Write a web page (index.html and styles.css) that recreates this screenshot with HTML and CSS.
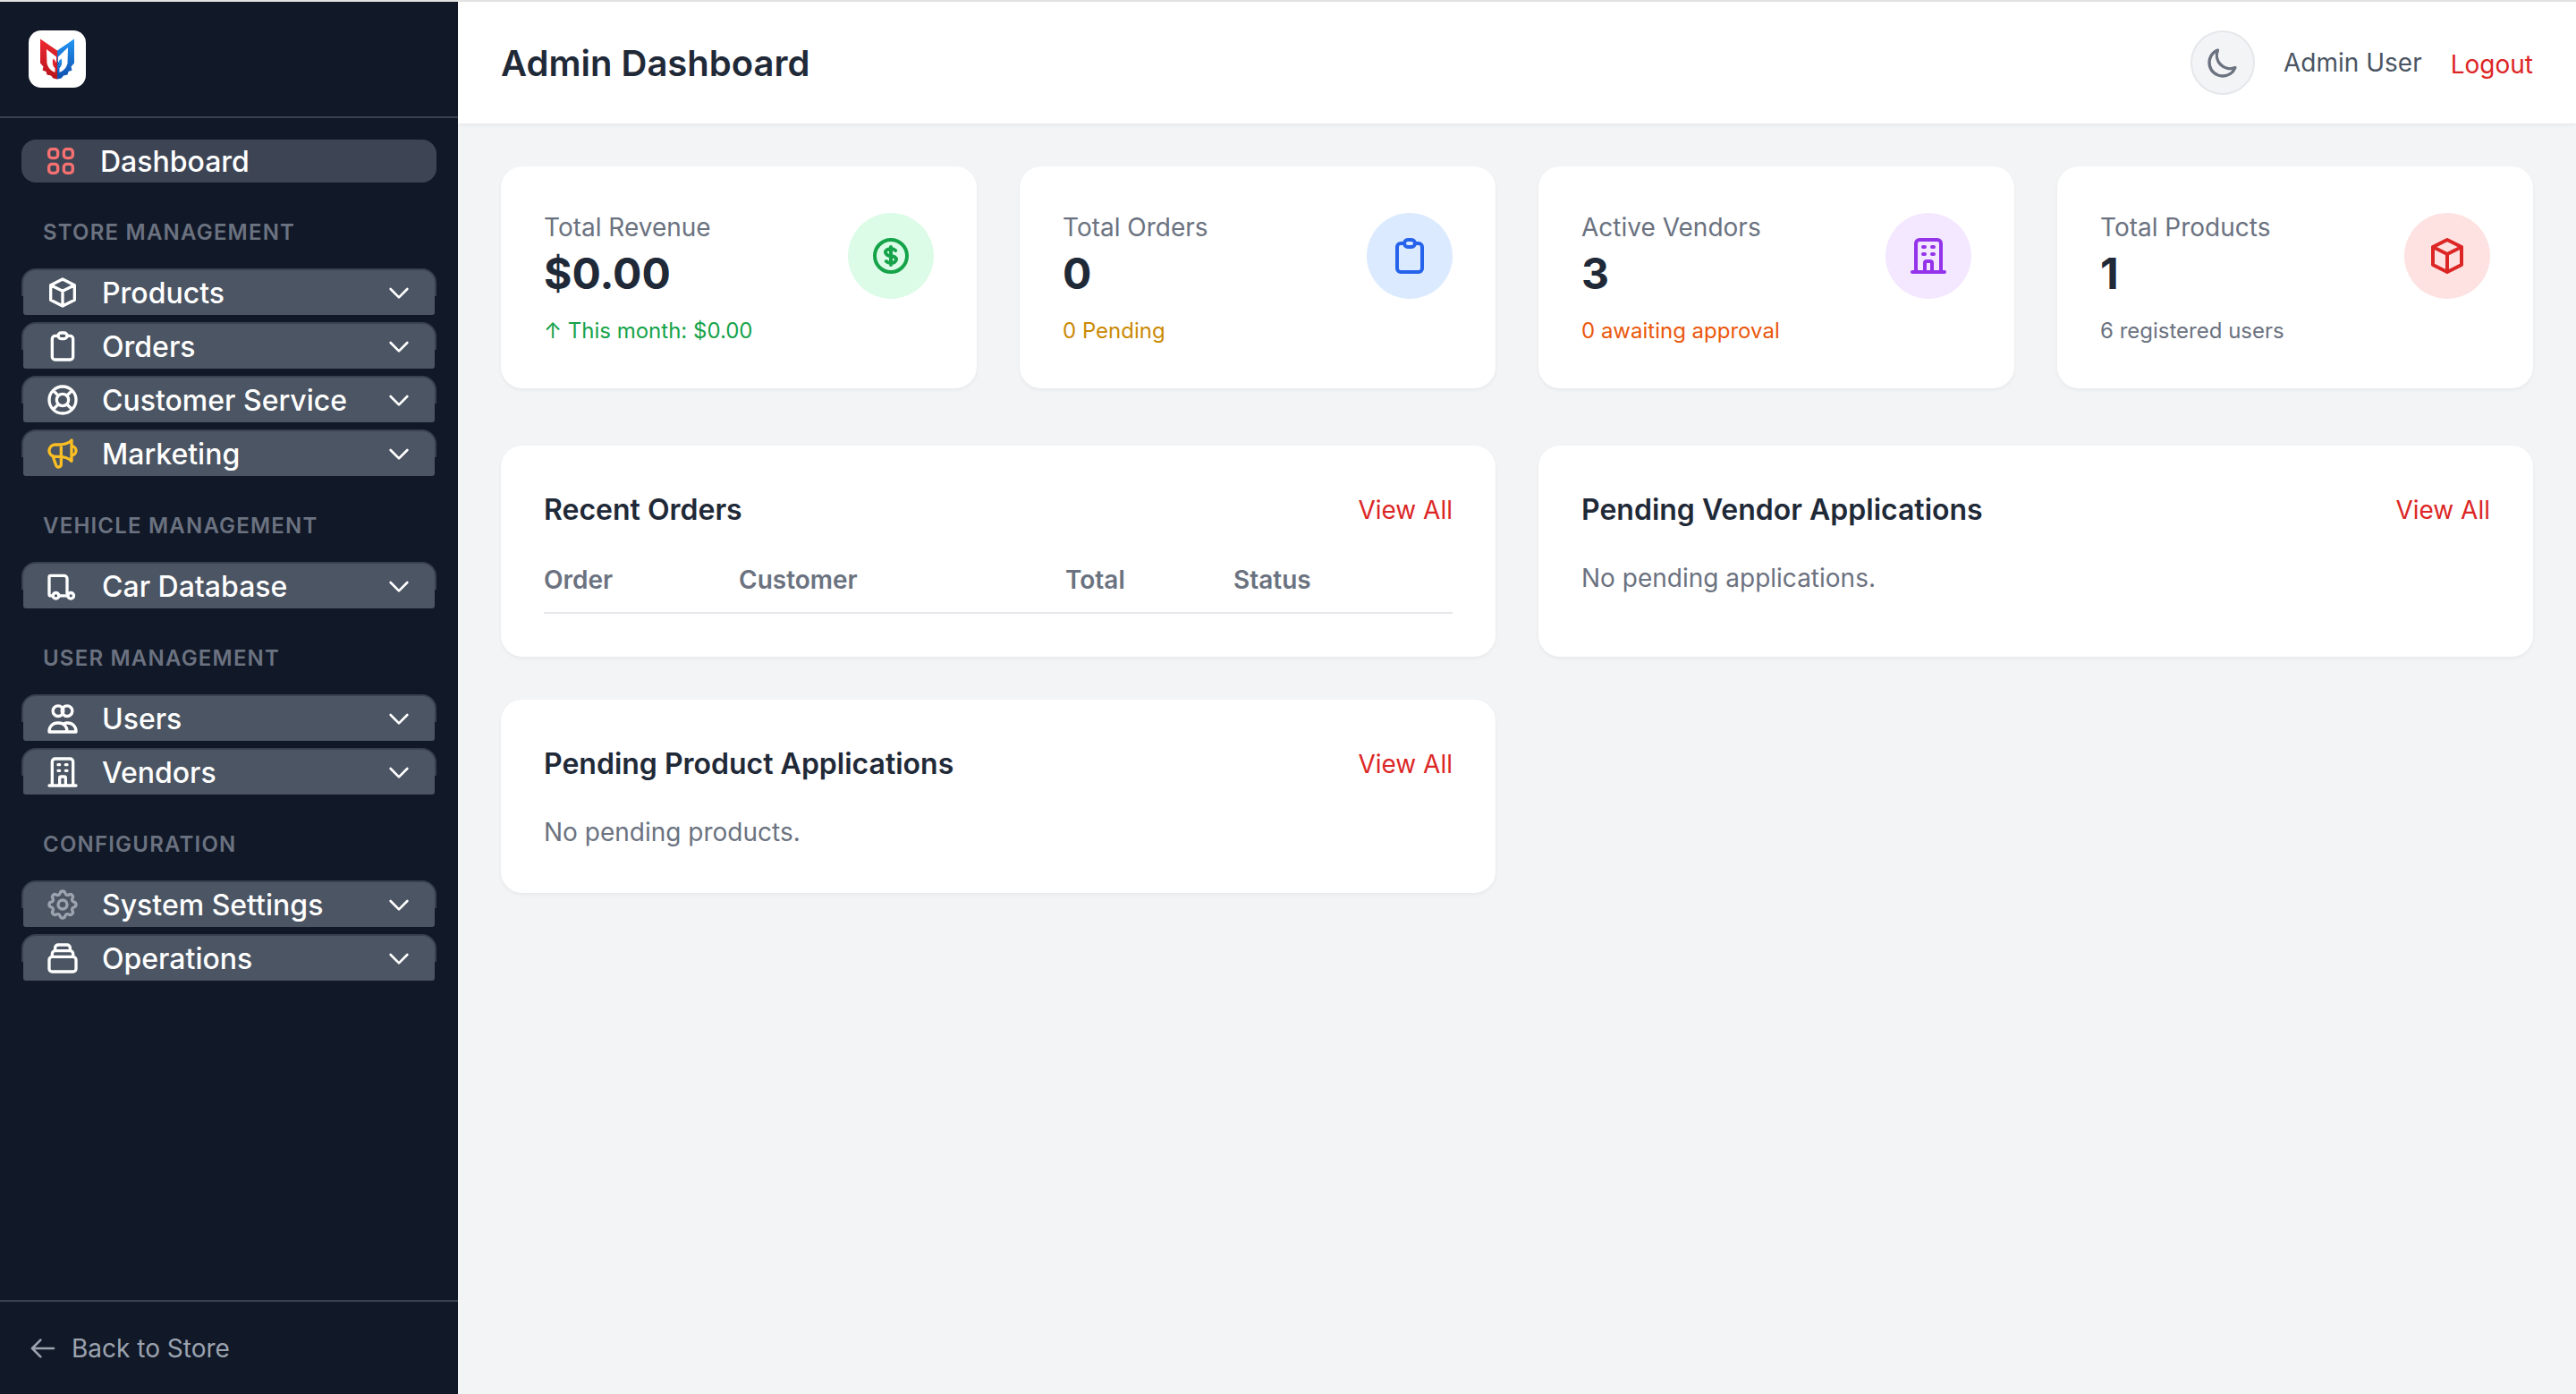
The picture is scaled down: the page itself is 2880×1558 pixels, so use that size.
FILE: index.html
```html
<!DOCTYPE html>
<html lang="en">
<head>
    <meta charset="utf-8">
    <title>Admin Dashboard</title>
    <link rel="stylesheet" href="styles.css">
</head>
<body>
    <div class="top-strip"></div>
    <div class="app">
        <!--Sidebar-->
        <aside class="sidebar">
            <div class="brand">
                <div class="logo">
                    <svg viewBox="0 0 64 64" width="64" height="64">
                        <defs>
                            <linearGradient id="logoRed" x1="0" y1="0" x2="0" y2="1"><stop offset="0" stop-color="#ee2a30"/><stop offset="1" stop-color="#b8141c"/></linearGradient>
                            <linearGradient id="logoBlue" x1="0" y1="0" x2="0" y2="1"><stop offset="0" stop-color="#2196f3"/><stop offset="1" stop-color="#0f4fae"/></linearGradient>
                        </defs>
                        <path fill="url(#logoRed)" d="M13 9.5L32 22.5V54.5L27.5 53.5L25 50.5L20.5 49.5L19.5 46L15.5 44.5L16.5 40.5L13 36.5Z"/>
                        <path fill="url(#logoBlue)" d="M51 9.500L32 22.500V54.500L36.500 53.500L39 50.500L43.500 49.500L44.500 46L48.500 44.500L47.500 40.500L51 36.500Z"/>
                        <path fill="#fff" d="M20 21L31 29.500V36L29 33.500C26.500 36 27 40 30 42V47C25 45.500 22 42 20.500 37Z"/>
                        <path fill="#fff" d="M44 19L33 29.500V36L35 33.500C37.500 36 37 40 34 42V47C39 45.500 42 42 43.500 37Z"/>
                        <path fill="url(#logoRed)" d="M27.500 31.500L30 34V38L31.500 39.500V52H29.500V42C27 40 26 35 27.500 31.500Z"/>
                        <path fill="url(#logoBlue)" d="M36.500 31.500L34 34V38L32.500 39.500V52H34.500V42C37 40 38 35 36.500 31.500Z"/>
                    </svg>
                </div>
            </div>

            <nav class="side-nav">
                <a class="dash-link">
                    <svg class="nav-icon icon-red" viewBox="0 0 24 24"><path d="M4 6a2 2 0 012-2h2a2 2 0 012 2v2a2 2 0 01-2 2H6a2 2 0 01-2-2V6zM14 6a2 2 0 012-2h2a2 2 0 012 2v2a2 2 0 01-2 2h-2a2 2 0 01-2-2V6zM4 16a2 2 0 012-2h2a2 2 0 012 2v2a2 2 0 01-2 2H6a2 2 0 01-2-2v-2zM14 16a2 2 0 012-2h2a2 2 0 012 2v2a2 2 0 01-2 2h-2a2 2 0 01-2-2v-2z"/></svg>
                    <span>Dashboard</span>
                </a>

                <h4 class="nav-title">Store Management</h4>
                <div class="nav-group">
                    <div class="nav-edge"><a class="nav-item">
                        <svg class="nav-icon" viewBox="0 0 24 24"><path d="M20 7l-8-4-8 4m16 0l-8 4m8-4v10l-8 4m0-10L4 7m8 4v10M4 7v10l8 4"/></svg>
                        <span>Products</span>
                        <svg class="chevron" viewBox="0 0 24 24"><path d="M19 9l-7 7-7-7"/></svg>
                    </a></div>
                    <div class="nav-edge"><a class="nav-item">
                        <svg class="nav-icon" viewBox="0 0 24 24"><path d="M9 5H7a2 2 0 00-2 2v12a2 2 0 002 2h10a2 2 0 002-2V7a2 2 0 00-2-2h-2M9 5a2 2 0 002 2h2a2 2 0 002-2M9 5a2 2 0 012-2h2a2 2 0 012 2"/></svg>
                        <span>Orders</span>
                        <svg class="chevron" viewBox="0 0 24 24"><path d="M19 9l-7 7-7-7"/></svg>
                    </a></div>
                    <div class="nav-edge"><a class="nav-item">
                        <svg class="nav-icon" viewBox="0 0 24 24"><path d="M18.364 5.636l-3.536 3.536m0 5.656l3.536 3.536M9.172 9.172L5.636 5.636m3.536 9.192l-3.536 3.536M21 12a9 9 0 11-18 0 9 9 0 0118 0zm-5 0a4 4 0 11-8 0 4 4 0 018 0z"/></svg>
                        <span>Customer Service</span>
                        <svg class="chevron" viewBox="0 0 24 24"><path d="M19 9l-7 7-7-7"/></svg>
                    </a></div>
                    <div class="nav-edge"><a class="nav-item">
                        <svg class="nav-icon icon-yellow" viewBox="0 0 24 24"><path d="M11 5.882V19.24a1.76 1.76 0 01-3.417.592l-2.147-6.15M18 13a3 3 0 100-6M5.436 13.683A4.001 4.001 0 017 6h1.832c4.1 0 7.625-1.234 9.168-3v14c-1.543-1.766-5.067-3-9.168-3H7a3.988 3.988 0 01-1.564-.317z"/></svg>
                        <span>Marketing</span>
                        <svg class="chevron" viewBox="0 0 24 24"><path d="M19 9l-7 7-7-7"/></svg>
                    </a></div>
                </div>

                <h4 class="nav-title">Vehicle Management</h4>
                <div class="nav-group">
                    <div class="nav-edge"><a class="nav-item">
                        <svg class="nav-icon" viewBox="0 0 24 24"><path d="M5.500 18.500H4a1 1 0 01-1-1V6a1 1 0 011-1h9a2 2 0 012 2v10"/><path d="M9.500 18.500h6"/><circle cx="7.500" cy="18.500" r="2"/><circle cx="17.500" cy="18.500" r="2"/></svg>
                        <span>Car Database</span>
                        <svg class="chevron" viewBox="0 0 24 24"><path d="M19 9l-7 7-7-7"/></svg>
                    </a></div>
                </div>

                <h4 class="nav-title">User Management</h4>
                <div class="nav-group">
                    <div class="nav-edge"><a class="nav-item">
                        <svg class="nav-icon" viewBox="0 0 24 24"><circle cx="9" cy="7" r="3.500"/><circle cx="15" cy="7" r="3.500"/><path d="M3 21v-.5A5.500 5.500 0 018.500 15h1a5.500 5.500 0 015.500 5.500v.5zM13 15.500a5 5 0 011.500-.5h1a5.500 5.500 0 015.500 5.500v.5h-6"/></svg>
                        <span>Users</span>
                        <svg class="chevron" viewBox="0 0 24 24"><path d="M19 9l-7 7-7-7"/></svg>
                    </a></div>
                    <div class="nav-edge"><a class="nav-item">
                        <svg class="nav-icon" viewBox="0 0 24 24"><path d="M19 21V5a2 2 0 00-2-2H7a2 2 0 00-2 2v16m14 0h2m-2 0h-5m-9 0H3m2 0h5M9 7h1m-1 4h1m4-4h1m-1 4h1m-5 10v-5a1 1 0 011-1h2a1 1 0 011 1v5m-4 0h4"/></svg>
                        <span>Vendors</span>
                        <svg class="chevron" viewBox="0 0 24 24"><path d="M19 9l-7 7-7-7"/></svg>
                    </a></div>
                </div>

                <h4 class="nav-title">Configuration</h4>
                <div class="nav-group">
                    <div class="nav-edge"><a class="nav-item">
                        <svg class="nav-icon icon-gray" viewBox="0 0 24 24"><path d="M10.325 4.317c.426-1.756 2.924-1.756 3.350 0a1.724 1.724 0 002.573 1.066c1.543-.94 3.310.826 2.370 2.370a1.724 1.724 0 001.065 2.572c1.756.426 1.756 2.924 0 3.350a1.724 1.724 0 00-1.066 2.573c.94 1.543-.826 3.310-2.370 2.370a1.724 1.724 0 00-2.572 1.065c-.426 1.756-2.924 1.756-3.350 0a1.724 1.724 0 00-2.573-1.066c-1.543.94-3.310-.826-2.370-2.370a1.724 1.724 0 00-1.065-2.572c-1.756-.426-1.756-2.924 0-3.350a1.724 1.724 0 001.066-2.573c-.94-1.543.826-3.310 2.370-2.370.996.608 2.296.07 2.572-1.065z"/><path d="M15 12a3 3 0 11-6 0 3 3 0 016 0z"/></svg>
                        <span>System Settings</span>
                        <svg class="chevron" viewBox="0 0 24 24"><path d="M19 9l-7 7-7-7"/></svg>
                    </a></div>
                    <div class="nav-edge"><a class="nav-item">
                        <svg class="nav-icon" viewBox="0 0 24 24"><path d="M19 11H5m14 0a2 2 0 012 2v6a2 2 0 01-2 2H5a2 2 0 01-2-2v-6a2 2 0 012-2m14 0V9a2 2 0 00-2-2M5 11V9a2 2 0 012-2m0 0V5a2 2 0 012-2h6a2 2 0 012 2v2M7 7h10"/></svg>
                        <span>Operations</span>
                        <svg class="chevron" viewBox="0 0 24 24"><path d="M19 9l-7 7-7-7"/></svg>
                    </a></div>
                </div>
            </nav>

            <div class="side-footer">
                <svg class="back-icon" viewBox="0 0 24 24"><path d="M10 19l-7-7m0 0l7-7m-7 7h18"/></svg>
                <span>Back to Store</span>
            </div>
        </aside>

        <!--Main-->
        <div class="main">
            <header class="topbar">
                <h1>Admin Dashboard</h1>
                <div class="topbar-right">
                    <button class="theme-btn">
                        <svg viewBox="0 0 24 24"><path d="M20.354 15.354A9 9 0 018.646 3.646 9.003 9.003 0 0012 21a9.003 9.003 0 008.354-5.646z"/></svg>
                    </button>
                    <span class="user-name">Admin User</span>
                    <a class="logout">Logout</a>
                </div>
            </header>

            <main class="content">
                <section class="stats">
                    <div class="card stat-card">
                        <div class="stat-top">
                            <div>
                                <p class="stat-label">Total Revenue</p>
                                <p class="stat-value">$0.00</p>
                            </div>
                            <div class="stat-icon bg-green">
                                <svg viewBox="0 0 24 24"><path d="M12 8c-1.657 0-3 .895-3 2s1.343 2 3 2 3 .895 3 2-1.343 2-3 2m0-8c1.110 0 2.080.402 2.599 1M12 8V7m0 1v8m0 0v1m0-1c-1.110 0-2.080-.402-2.599-1M21 12a9 9 0 11-18 0 9 9 0 0118 0z"/></svg>
                            </div>
                        </div>
                        <p class="stat-note text-green">↑ This month: $0.00</p>
                    </div>
                    <div class="card stat-card">
                        <div class="stat-top">
                            <div>
                                <p class="stat-label">Total Orders</p>
                                <p class="stat-value">0</p>
                            </div>
                            <div class="stat-icon bg-blue">
                                <svg viewBox="0 0 24 24"><path d="M9 5H7a2 2 0 00-2 2v12a2 2 0 002 2h10a2 2 0 002-2V7a2 2 0 00-2-2h-2M9 5a2 2 0 002 2h2a2 2 0 002-2M9 5a2 2 0 012-2h2a2 2 0 012 2"/></svg>
                            </div>
                        </div>
                        <p class="stat-note text-yellow">0 Pending</p>
                    </div>
                    <div class="card stat-card">
                        <div class="stat-top">
                            <div>
                                <p class="stat-label">Active Vendors</p>
                                <p class="stat-value">3</p>
                            </div>
                            <div class="stat-icon bg-purple">
                                <svg viewBox="0 0 24 24"><path d="M19 21V5a2 2 0 00-2-2H7a2 2 0 00-2 2v16m14 0h2m-2 0h-5m-9 0H3m2 0h5M9 7h1m-1 4h1m4-4h1m-1 4h1m-5 10v-5a1 1 0 011-1h2a1 1 0 011 1v5m-4 0h4"/></svg>
                            </div>
                        </div>
                        <p class="stat-note text-orange">0 awaiting approval</p>
                    </div>
                    <div class="card stat-card">
                        <div class="stat-top">
                            <div>
                                <p class="stat-label">Total Products</p>
                                <p class="stat-value">1</p>
                            </div>
                            <div class="stat-icon bg-red">
                                <svg viewBox="0 0 24 24"><path d="M20 7l-8-4-8 4m16 0l-8 4m8-4v10l-8 4m0-10L4 7m8 4v10M4 7v10l8 4"/></svg>
                            </div>
                        </div>
                        <p class="stat-note text-gray">6 registered users</p>
                    </div>
                </section>

                <section class="panels">
                    <div class="card panel">
                        <div class="panel-head">
                            <h3>Recent Orders</h3>
                            <a class="view-all">View All</a>
                        </div>
                        <table class="orders">
                            <thead>
                                <tr>
                                    <th class="col-order">Order</th>
                                    <th class="col-customer">Customer</th>
                                    <th class="col-total">Total</th>
                                    <th>Status</th>
                                </tr>
                            </thead>
                            <tbody></tbody>
                        </table>
                    </div>
                    <div class="card panel">
                        <div class="panel-head">
                            <h3>Pending Vendor Applications</h3>
                            <a class="view-all">View All</a>
                        </div>
                        <p class="empty">No pending applications.</p>
                    </div>
                    <div class="card panel">
                        <div class="panel-head">
                            <h3>Pending Product Applications</h3>
                            <a class="view-all">View All</a>
                        </div>
                        <p class="empty">No pending products.</p>
                    </div>
                </section>
            </main>
        </div>
    </div>
</body>
</html>
```
FILE: styles.css
```css
* {
    box-sizing: border-box;
}
html, body {
    margin: 0;
    height: 100%;
}
body {
    font-family: Inter, "Liberation Sans", sans-serif;
    background-color: #f3f4f6;
    display: flex;
    flex-direction: column;
}
p, h1, h3, h4 {
    margin: 0;
}
svg {
    fill: none;
    stroke: currentColor;
    stroke-width: 2;
    stroke-linecap: round;
    stroke-linejoin: round;
    flex-shrink: 0;
}
.top-strip {
    height: 2px;
    background-color: #e2e2e2;
}
.app {
    flex: 1;
    display: flex;
    min-height: 0;
}

/* sidebar */
.sidebar {
    width: 512px;
    background-color: #111827;
    display: flex;
    flex-direction: column;
}
.brand {
    padding: 32px;
    border-bottom: 2px solid #374151;
}
.logo {
    width: 64px;
    height: 64px;
    background-color: #fff;
    border-radius: 14px;
    box-shadow: 0 0 0 0 #000;
}
.logo svg {
    display: block;
    stroke: none;
}
.side-nav {
    flex: 1;
    padding: 24px 24px 0;
}
.dash-link {
    display: flex;
    align-items: center;
    gap: 24px;
    height: 48px;
    padding-left: 24px;
    border-radius: 16px;
    background-color: #3d4555;
    color: #fff;
    font-size: 32px;
    font-weight: 500;
}
.nav-title {
    margin: 40px 0 24px;
    padding-left: 24px;
    font-size: 24px;
    line-height: 32px;
    font-weight: 600;
    letter-spacing: 1.2px;
    text-transform: uppercase;
    color: #6b7280;
}
.nav-group {
    display: flex;
    flex-direction: column;
    gap: 8px;
}
.nav-edge {
    height: 52px;
    padding: 2px 2px 0;
    border-radius: 16px 16px 0 0;
    background: linear-gradient(#374151 60%, transparent 60%);
}
.nav-item {
    display: flex;
    align-items: center;
    gap: 24px;
    height: 50px;
    padding: 0 24px;
    border-radius: 14px 14px 3px 3px;
    background-color: #4b5563;
    color: #fff;
    font-size: 32px;
    font-weight: 500;
}
.nav-item span {
    flex: 1;
}
.nav-icon {
    width: 40px;
    height: 40px;
}
.chevron {
    width: 32px;
    height: 32px;
}
.icon-red {
    color: #f87171;
}
.icon-yellow {
    color: #fbbf24;
}
.icon-gray {
    color: #9ca3af;
}
.side-footer {
    height: 105px;
    display: flex;
    align-items: center;
    gap: 16px;
    padding: 0 32px;
    border-top: 2px solid #374151;
    color: #9ca3af;
    font-size: 28px;
}
.back-icon {
    width: 32px;
    height: 32px;
}

/* top bar */
.main {
    flex: 1;
    min-width: 0;
}
.topbar {
    height: 136px;
    display: flex;
    align-items: center;
    justify-content: space-between;
    padding: 0 48px;
    background-color: #fff;
    box-shadow: 0 2px 4px rgba(0, 0, 0, .05);
}
.topbar h1 {
    font-size: 40px;
    font-weight: 600;
    color: #1f2937;
}
.topbar-right {
    display: flex;
    align-items: center;
    gap: 32px;
    font-size: 28px;
}
.theme-btn {
    width: 72px;
    height: 72px;
    padding: 0;
    display: flex;
    align-items: center;
    justify-content: center;
    background-color: #f3f4f6;
    border: 2px solid #e5e7eb;
    border-radius: 50%;
    color: #6b7280;
}
.theme-btn svg {
    width: 40px;
    height: 40px;
}
.user-name {
    color: #4b5563;
}
.logout {
    margin-top: 4px;
    color: #dc2626;
}

/* content */
.content {
    padding: 48px;
}
.card {
    background-color: #fff;
    border-radius: 24px;
    box-shadow: 0 2px 4px rgba(0, 0, 0, .05);
}
.stats {
    display: grid;
    grid-template-columns: repeat(4, 1fr);
    gap: 48px;
    margin-bottom: 64px;
}
.stat-card {
    padding: 48px;
}
.stat-top {
    display: flex;
    align-items: center;
    justify-content: space-between;
}
.stat-label {
    font-size: 28px;
    line-height: 40px;
    color: #6b7280;
}
.stat-value {
    font-size: 48px;
    line-height: 64px;
    font-weight: 700;
    color: #1f2937;
}
.stat-note {
    margin-top: 16px;
    font-size: 24px;
    line-height: 32px;
}
.stat-icon {
    width: 96px;
    height: 96px;
    border-radius: 50%;
    display: flex;
    align-items: center;
    justify-content: center;
}
.stat-icon svg {
    width: 48px;
    height: 48px;
}
.bg-green {
    background-color: #dcfce7;
    color: #16a34a;
}
.bg-blue {
    background-color: #dbeafe;
    color: #2563eb;
}
.bg-purple {
    background-color: #f3e8ff;
    color: #9333ea;
}
.bg-red {
    background-color: #fee2e2;
    color: #dc2626;
}
.text-green {
    color: #16a34a;
}
.text-yellow {
    color: #ca8a04;
}
.text-orange {
    color: #ea580c;
}
.text-gray {
    color: #6b7280;
}
.panels {
    display: grid;
    grid-template-columns: repeat(2, 1fr);
    align-items: stretch;
    gap: 48px;
}
.panel {
    padding: 48px;
}
.panel-head {
    display: flex;
    align-items: center;
    justify-content: space-between;
    margin-bottom: 32px;
}
.panel-head h3 {
    font-size: 32px;
    line-height: 48px;
    font-weight: 600;
    color: #1f2937;
}
.view-all {
    font-size: 28px;
    color: #dc2626;
}
.empty {
    font-size: 28px;
    line-height: 40px;
    color: #6b7280;
}
.orders {
    width: 100%;
    border-collapse: collapse;
    table-layout: fixed;
}
.orders th {
    padding: 2px 0 16px;
    font-size: 28px;
    line-height: 40px;
    font-weight: 600;
    text-align: left;
    color: #6b7280;
    border-bottom: 2px solid #e5e7eb;
}
.col-order {
    width: 218px;
}
.col-customer {
    width: 365px;
}
.col-total {
    width: 188px;
}
```
